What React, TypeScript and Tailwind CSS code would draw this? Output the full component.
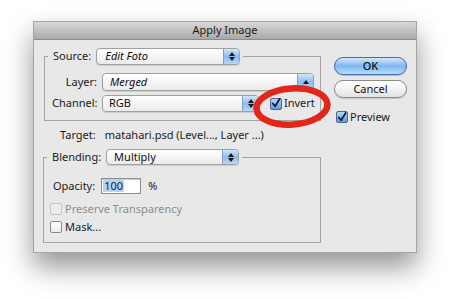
import React from "react";

const font = { fontFamily: '"Noto Sans", "Open Sans", sans-serif' };

function Stepper({ upOnly = false }: { upOnly?: boolean }) {
  return (
    <div className="w-[16px] self-stretch rounded-r-[4px] bg-gradient-to-b from-[#d2e6fb] via-[#8dbcf0] to-[#b5d6f8] border-l border-[#7f9fc8] flex flex-col items-center justify-center gap-[1px]">
      <svg width="6" height="4" viewBox="0 0 6 4"><path d="M0 4 L3 0 L6 4 Z" fill="#1a1a1a" /></svg>
      {!upOnly && <svg width="6" height="4" viewBox="0 0 6 4"><path d="M0 0 L3 4 L6 0 Z" fill="#1a1a1a" /></svg>}
    </div>
  );
}

function Popup({ w, h = 17, text, italic = false, pl = 7, upOnly = false }: { w: string; h?: number; text: string; italic?: boolean; pl?: number; upOnly?: boolean }) {
  return (
    <div
      className={`${w} flex items-stretch rounded-[4px] border border-[#a0a0a0] bg-gradient-to-b from-[#ffffff] to-[#ebebeb] shadow-[0_1px_1px_rgba(0,0,0,0.12)] overflow-hidden`}
      style={{ height: h }}
    >
      <div className={`flex-1 flex items-center text-[11px] text-[#111] ${italic ? "italic" : ""}`} style={{ paddingLeft: pl }}>
        {text}
      </div>
      <Stepper upOnly={upOnly} />
    </div>
  );
}

function Check({ checked = false, disabled = false }: { checked?: boolean; disabled?: boolean }) {
  if (checked) {
    return (
      <div className="w-[12px] h-[12px] rounded-[2px] border border-[#4a6890] bg-gradient-to-b from-[#b6d6f7] to-[#5f9ae0] flex items-center justify-center">
        <svg width="11" height="11" viewBox="0 0 11 11">
          <path d="M2 5.5 L4.5 8.5 L9.5 0.5" fill="none" stroke="#0d1b2e" strokeWidth="1.9" strokeLinecap="round" strokeLinejoin="round" />
        </svg>
      </div>
    );
  }
  return (
    <div
      className={`w-[12px] h-[12px] rounded-[2px] border ${disabled ? "border-[#c4c4c4] bg-[#ececec]" : "border-[#8a8a8a] bg-gradient-to-b from-white to-[#ececec]"}`}
    />
  );
}

export default function App() {
  return (
    <div className="w-[450px] h-[299px] bg-white overflow-hidden pt-[21px] pl-[33px]" style={font}>
      <div className="w-[384px] h-[232px] flex flex-col shadow-[0_14px_26px_rgba(0,0,0,0.42)] border border-[#a5a5a5]">
        <div className="h-[18px] bg-gradient-to-b from-[#d9d9d9] to-[#a9a9a9] border-b border-[#8c8c8c] flex items-center justify-center text-[11px] text-[#1a1a1a]">
          Apply Image
        </div>
        <div className="flex-1 bg-[#e8e8e8] flex relative text-[11px] text-[#1a1a1a]">
          {/* Left column */}
          <div className="flex flex-col pl-[10px] pt-[8px]">
            <fieldset className="w-[277px] h-[73px] border border-[#a3a3a3]">
              <legend className="ml-[3px] pl-[5px] pr-[3px]">
                <div className="flex items-center gap-[5px]">
                  <span>Source:</span>
                  <Popup w="w-[144px]" text="Edit Foto" italic pl={8} />
                </div>
              </legend>
              <div className="flex flex-col gap-[4px] pl-[7px] mt-[8px]">
                <div className="flex items-center gap-[5px]">
                  <span className="w-[45px] text-right">Layer:</span>
                  <Popup w="w-[212px]" h={18} text="Merged" italic upOnly />
                </div>
                <div className="flex items-center gap-[5px]">
                  <span className="w-[45px] text-right">Channel:</span>
                  <Popup w="w-[157px]" text="RGB" pl={6} />
                  <div className="flex items-center gap-[2px] ml-[6px]">
                    <Check checked />
                    <span>Invert</span>
                  </div>
                </div>
              </div>
            </fieldset>

            <div className="flex items-center mt-[7px] pl-[16px] h-[15px]">
              <span>Target:</span>
              <span className="ml-[9px]">matahari.psd (Level..., Layer ...)</span>
            </div>

            <fieldset className="w-[278px] h-[94px] border border-[#a3a3a3] mt-[6px] -ml-[1px]">
              <legend className="ml-[3px] pl-[5px] pr-[3px]">
                <div className="flex items-center gap-[5px]">
                  <span>Blending:</span>
                  <Popup w="w-[133px]" h={16} text="Multiply" pl={7} />
                </div>
              </legend>
              <div className="flex flex-col pl-[6px] mt-[12px]">
                <div className="flex items-center pl-[3px]">
                  <span>Opacity:</span>
                  <div className="ml-[6px] w-[40px] h-[16px] bg-white border border-[#8e8e8e] shadow-[inset_0_1px_1px_rgba(0,0,0,0.2)] flex items-center pl-[1px]">
                    <span className="bg-[#b4d3f5] px-[1px] leading-[13px]">100</span>
                  </div>
                  <span className="ml-[7px]">%</span>
                </div>
                <div className="flex items-center gap-[3px] mt-[8px] h-[14px]">
                  <Check disabled />
                  <span className="text-[#8d8d8d]">Preserve Transparency</span>
                </div>
                <div className="flex items-center gap-[3px] mt-[4px] h-[14px]">
                  <Check />
                  <span>Mask...</span>
                </div>
              </div>
            </fieldset>
          </div>

          {/* Right column */}
          <div className="flex flex-col ml-[13px] pt-[17px]">
            <div className="w-[73px] h-[18px] rounded-full border border-[#3f6ea8] bg-gradient-to-b from-[#d3e8fc] via-[#7fb6ef] to-[#b7dcfd] flex items-center justify-center text-[11px] font-medium text-[#111] shadow-[0_1px_1px_rgba(0,0,0,0.2)]">
              OK
            </div>
            <div className="mt-[5px] w-[73px] h-[18px] rounded-full border border-[#8a8a8a] bg-gradient-to-b from-white via-[#f3f3f3] to-[#e2e2e2] flex items-center justify-center text-[11px] text-[#111] shadow-[0_1px_1px_rgba(0,0,0,0.15)]">
              Cancel
            </div>
            <div className="mt-[11px] ml-[2px] flex items-center gap-[2px]">
              <Check checked />
              <span>Preview</span>
            </div>
          </div>

          {/* Red annotation ellipse */}
          <svg className="absolute left-[219px] top-[45px]" width="80" height="45" viewBox="0 0 80 45">
            <ellipse cx="39" cy="21.5" rx="35.5" ry="18" fill="none" stroke="#e3261a" strokeWidth="6.5" transform="rotate(-4 39 21.5)" />
          </svg>
        </div>
      </div>
    </div>
  );
}
